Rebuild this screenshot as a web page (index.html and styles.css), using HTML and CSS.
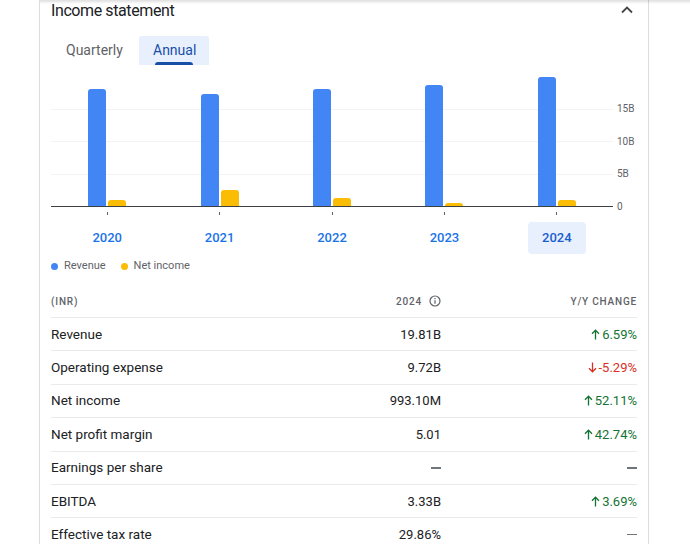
FILE: index.html
```html
<!DOCTYPE html>
<html lang="en">
<head>
<meta charset="utf-8">
<title>Income statement</title>
<link rel="stylesheet" href="styles.css">
</head>
<body>
<div class="topshade"></div>
<div class="page">
  <section class="card">
    <header class="card-head">
      <h2 class="title">Income statement</h2>
      <svg class="chevron" width="12" height="8" viewBox="0 0 12 8" aria-hidden="true"><path d="M1 6.5 L6 1.5 L11 6.5" fill="none" stroke="#444746" stroke-width="1.8"/></svg>
    </header>

    <div class="tabs">
      <button class="tab first">Quarterly</button>
      <button class="tab active">Annual</button>
    </div>

    <div class="chart">
      <div class="plot">
        <div class="group"><div class="bar rev" style="height:117px"></div><div class="bar ni" style="height:6px"></div></div>
        <div class="group"><div class="bar rev" style="height:112.5px"></div><div class="bar ni" style="height:16px"></div></div>
        <div class="group"><div class="bar rev" style="height:117px"></div><div class="bar ni" style="height:8px"></div></div>
        <div class="group"><div class="bar rev" style="height:121px"></div><div class="bar ni" style="height:3.5px"></div></div>
        <div class="group"><div class="bar rev" style="height:129.5px"></div><div class="bar ni" style="height:6px"></div></div>
      </div>
      <div class="yaxis">
        <span>15B</span><span>10B</span><span>5B</span><span>0</span>
      </div>
      <div class="xaxis">
        <div class="xcell"><i class="tick"></i><span class="year">2020</span></div>
        <div class="xcell"><i class="tick"></i><span class="year">2021</span></div>
        <div class="xcell"><i class="tick"></i><span class="year">2022</span></div>
        <div class="xcell"><i class="tick"></i><span class="year">2023</span></div>
        <div class="xcell"><i class="tick"></i><span class="year selected">2024</span></div>
      </div>
    </div>

    <div class="legend">
      <span class="legend-item"><i class="dot dot-rev"></i>Revenue</span>
      <span class="legend-item"><i class="dot dot-ni"></i>Net income</span>
    </div>

    <div class="table">
      <div class="row head">
        <span class="c-label">(INR)</span>
        <span class="c-val">2024
          <svg class="info" width="12" height="12" viewBox="0 0 12 12" aria-hidden="true"><circle cx="6" cy="6" r="5" fill="none" stroke="#5f6368" stroke-width="1.2"/><rect x="5.4" y="5.2" width="1.2" height="3.6" fill="#5f6368"/><rect x="5.4" y="3" width="1.2" height="1.2" fill="#5f6368"/></svg>
        </span>
        <span class="c-chg">Y/Y change</span>
      </div>
      <div class="row">
        <span class="c-label">Revenue</span>
        <span class="c-val">19.81B</span>
        <span class="c-chg up"><svg class="arrow" width="9" height="11" viewBox="0 0 9 11"><path d="M4.5 10.5V1.2M1 4.7L4.5 1.2L8 4.7" fill="none" stroke="currentColor" stroke-width="1.3"/></svg>6.59%</span>
      </div>
      <div class="row">
        <span class="c-label">Operating expense</span>
        <span class="c-val">9.72B</span>
        <span class="c-chg down"><svg class="arrow" width="9" height="11" viewBox="0 0 9 11"><path d="M4.5 0.5V9.8M1 6.3L4.5 9.8L8 6.3" fill="none" stroke="currentColor" stroke-width="1.3"/></svg>-5.29%</span>
      </div>
      <div class="row">
        <span class="c-label">Net income</span>
        <span class="c-val">993.10M</span>
        <span class="c-chg up"><svg class="arrow" width="9" height="11" viewBox="0 0 9 11"><path d="M4.5 10.5V1.2M1 4.7L4.5 1.2L8 4.7" fill="none" stroke="currentColor" stroke-width="1.3"/></svg>52.11%</span>
      </div>
      <div class="row">
        <span class="c-label">Net profit margin</span>
        <span class="c-val">5.01</span>
        <span class="c-chg up"><svg class="arrow" width="9" height="11" viewBox="0 0 9 11"><path d="M4.5 10.5V1.2M1 4.7L4.5 1.2L8 4.7" fill="none" stroke="currentColor" stroke-width="1.3"/></svg>42.74%</span>
      </div>
      <div class="row">
        <span class="c-label">Earnings per share</span>
        <span class="c-val"><i class="dash"></i></span>
        <span class="c-chg"><i class="dash"></i></span>
      </div>
      <div class="row">
        <span class="c-label">EBITDA</span>
        <span class="c-val">3.33B</span>
        <span class="c-chg up"><svg class="arrow" width="9" height="11" viewBox="0 0 9 11"><path d="M4.5 10.5V1.2M1 4.7L4.5 1.2L8 4.7" fill="none" stroke="currentColor" stroke-width="1.3"/></svg>3.69%</span>
      </div>
      <div class="row">
        <span class="c-label">Effective tax rate</span>
        <span class="c-val">29.86%</span>
        <span class="c-chg"><i class="dash"></i></span>
      </div>
    </div>
  </section>
</div>
</body>
</html>
```

FILE: styles.css
```css
* { box-sizing: border-box; }

html, body {
  margin: 0;
  padding: 0;
  background: #fff;
  font-family: Roboto, "Liberation Sans", Arial, sans-serif;
  color: #202124;
  overflow: hidden;
}

.topshade {
  position: absolute;
  top: 0;
  left: 40px;
  right: 0;
  height: 4px;
  background: linear-gradient(rgba(0,0,0,0.13), rgba(0,0,0,0));
  z-index: 2;
}

.page {
  padding-left: 39px;
}

.card {
  width: 610px;
  min-height: 100vh;
  border-left: 1px solid #dadce0;
  border-right: 1px solid #dadce0;
  padding: 0 11px;
}

.card-head {
  display: flex;
  align-items: center;
  justify-content: space-between;
  height: 20px;
}

.title {
  margin: 0;
  font-size: 16px;
  font-weight: 400;
  line-height: 21px;
  padding-top: 1px;
  letter-spacing: -0.4px;
  color: #202124;
}

.chevron {
  display: block;
  margin-right: 4px;
}

.tabs {
  display: flex;
  margin-top: 16px;
  height: 29px;
}

.tab {
  border: 0;
  background: transparent;
  font: inherit;
  font-size: 14px;
  color: #5f6368;
  padding: 0 14px;
  height: 29px;
  line-height: 27px;
  margin: 0 0 0 1px;
  position: relative;
  white-space: nowrap;
}

.tab.first {
  width: 86px;
  text-align: left;
}

.tab.active {
  background: #e8f0fe;
  color: #174ea6;
  border-radius: 2px 2px 0 0;
  width: 70px;
  text-align: left;
}

.tab.active::after {
  content: "";
  position: absolute;
  left: 16px;
  right: 16px;
  bottom: 0;
  height: 3px;
  background: #174ea6;
  border-radius: 3px 3px 0 0;
}

.chart {
  display: grid;
  grid-template-columns: 1fr 20px;
  column-gap: 4px;
  margin-top: 1px;
}

.plot {
  height: 141px;
  border-bottom: 1px solid #3c4043;
  display: flex;
  background-image:
    linear-gradient(#f1f3f4, #f1f3f4),
    linear-gradient(#f1f3f4, #f1f3f4),
    linear-gradient(#f1f3f4, #f1f3f4);
  background-repeat: no-repeat;
  background-size: 100% 1px;
  background-position: 0 43px, 0 75px, 0 108px;
}

.group {
  flex: 1;
  display: flex;
  justify-content: center;
  align-items: flex-end;
  gap: 2px;
}

.bar {
  width: 18px;
  border-radius: 3px 3px 0 0;
}

.bar.rev { background: #4285f4; }
.bar.ni { background: #fbbc04; }

.yaxis {
  display: flex;
  flex-direction: column;
  justify-content: flex-end;
  margin-bottom: -16.3px;
  font-size: 10px;
  color: #5f6368;
}

.yaxis span {
  height: 32.6px;
  line-height: 32.6px;
  white-space: nowrap;
}

.xaxis {
  display: flex;
}

.xcell {
  flex: 1;
  display: flex;
  flex-direction: column;
  align-items: center;
}

.tick {
  display: block;
  width: 1px;
  height: 3px;
  margin-top: 5px;
  background: #5f6368;
}

.year {
  margin-top: 7px;
  width: 58px;
  height: 32px;
  line-height: 32px;
  text-align: center;
  font-size: 13px;
  font-weight: 500;
  color: #1a73e8;
  border-radius: 4px;
}

.year.selected {
  background: #e8f0fe;
  color: #1a5ecf;
}

.legend {
  display: flex;
  gap: 15px;
  margin-top: 4px;
  height: 16px;
  font-size: 11px;
  line-height: 16px;
  color: #5f6368;
}

.legend-item {
  display: flex;
  align-items: center;
  gap: 6px;
}

.dot {
  display: block;
  width: 7px;
  height: 7px;
  border-radius: 50%;
}

.dot-rev { background: #4285f4; }
.dot-ni { background: #fbbc04; }

.table {
  margin-top: 11px;
}

.row {
  display: grid;
  grid-template-columns: 1fr 120px 196px;
  align-items: center;
  height: 33.4px;
  border-bottom: 1px solid #e8eaed;
  font-size: 13px;
  color: #202124;
}

.row .c-label {
  font-size: 13.5px;
  margin-top: -1px;
}

.row.head {
  height: 33px;
  font-size: 10px;
  font-weight: 500;
  letter-spacing: 0.8px;
  text-transform: uppercase;
  color: #5f6368;
}

.row.head .c-label {
  font-size: 10px;
  margin-top: 0;
}

.c-val, .c-chg {
  display: flex;
  align-items: center;
  justify-content: flex-end;
  white-space: nowrap;
}

.info {
  display: block;
  margin-left: 7px;
}

.up { color: #137333; }
.down { color: #d93025; }

.dash {
  display: block;
  width: 10px;
  height: 1.5px;
  background: #70757a;
}

.arrow {
  display: block;
  margin-right: 2px;
}
```
